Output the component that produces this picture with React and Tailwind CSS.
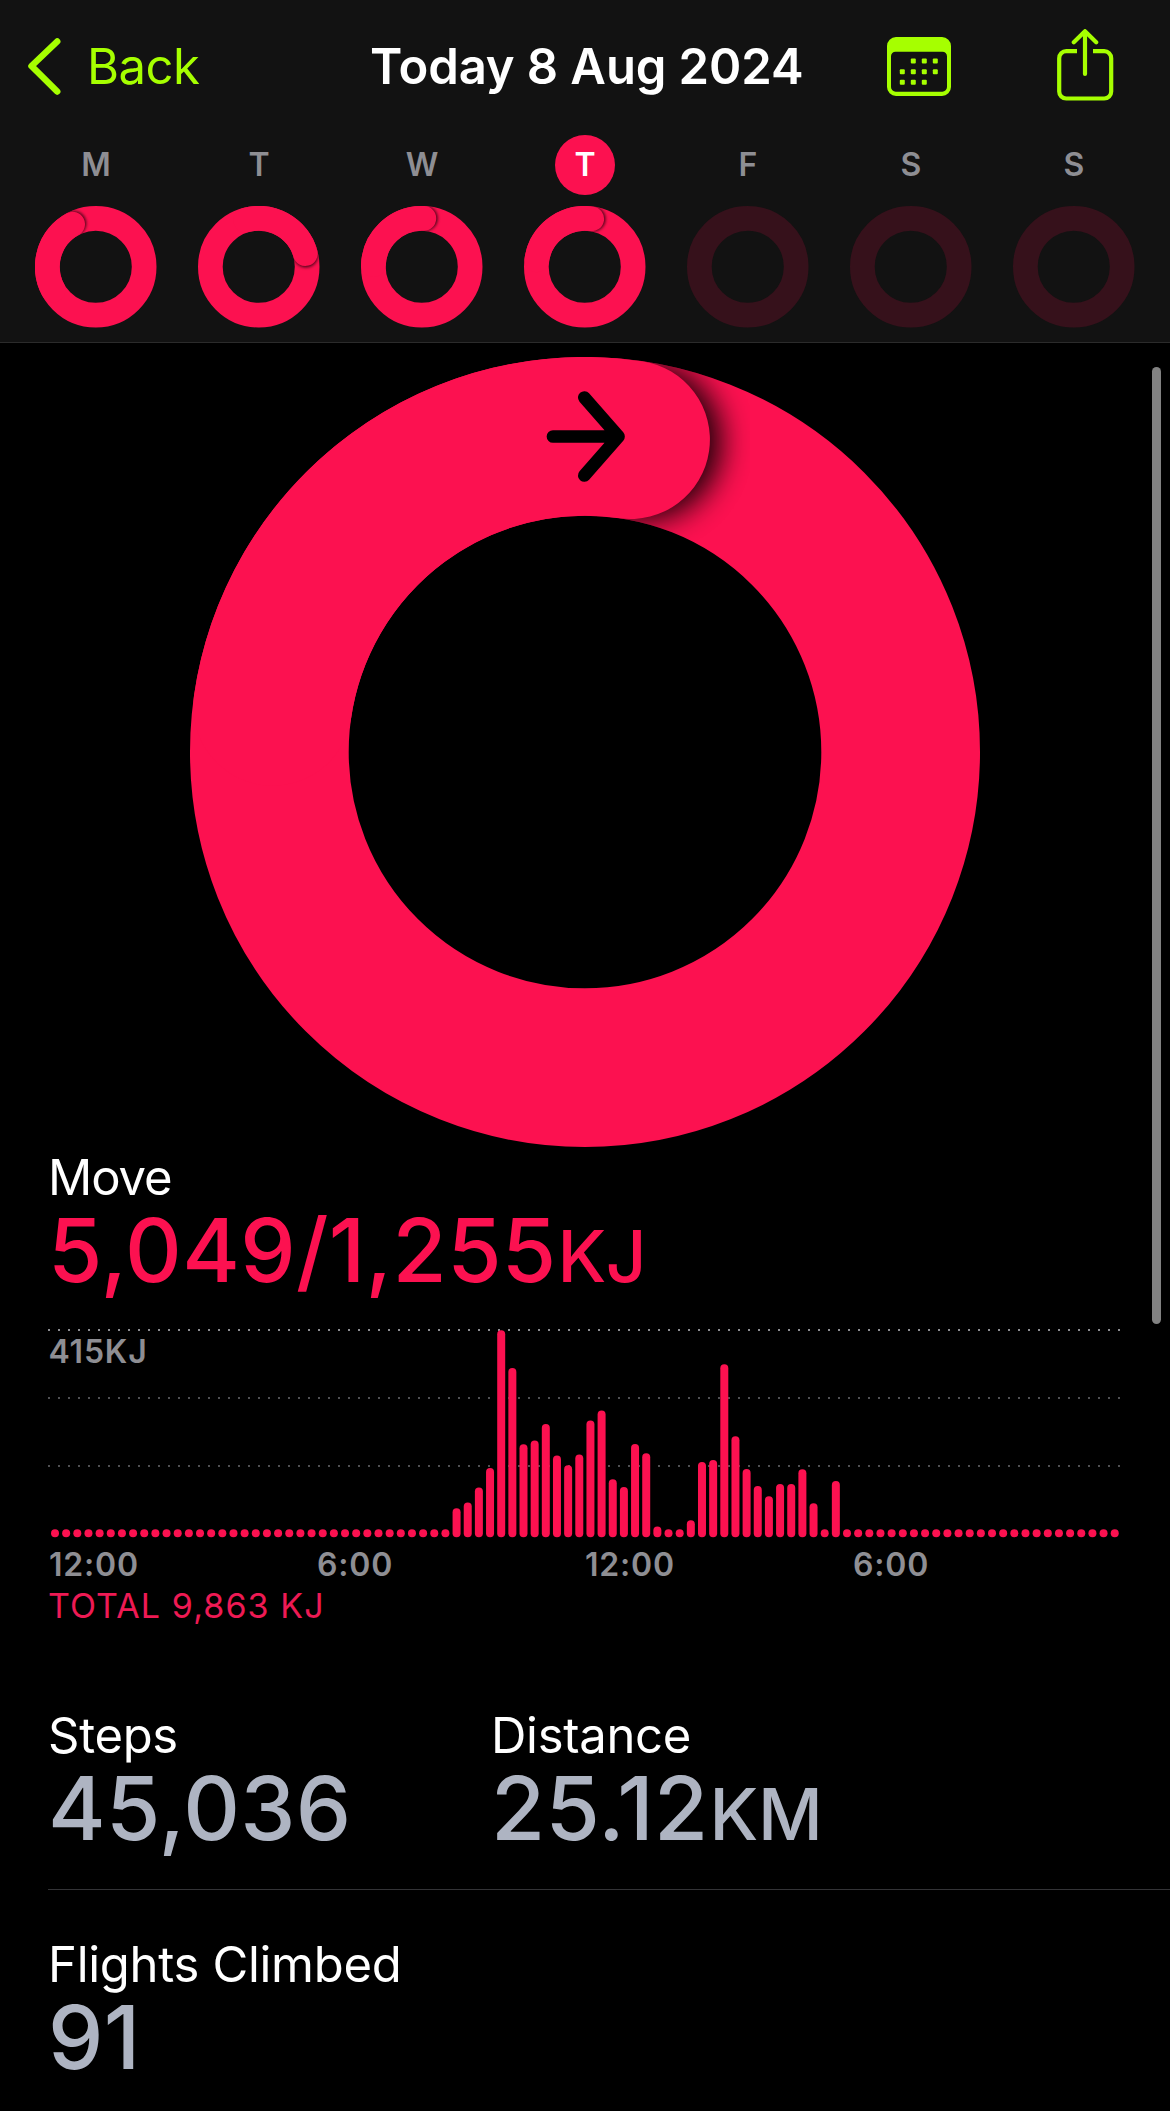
import React from 'react';

const WEEK = [
  { label: 'M', angle: -28.5 },
  { label: 'T', angle: 74.3 },
  { label: 'W', angle: 2.5 },
  { label: 'T', angle: 8.3, today: true },
  { label: 'F' },
  { label: 'S' },
  { label: 'S' },
];

// One bar per 15 minutes, everything outside the active part sits at the minimum
const ACTIVE_START = 36;
const ACTIVE = [
  29, 34.7, 49.7, 69.3, 207, 169.3, 93, 96.7, 113.3, 81.7, 72, 82.7, 116.7, 126.7, 58, 50.3,
  93.3, 84, 10.7, 8, 8, 17, 75.3, 77.3, 173, 101, 68.3, 51.3, 41, 53.3, 53.3, 68, 34, 8, 56.3,
];
const BARS = Array.from({ length: 96 }, (_, i) => ACTIVE[i - ACTIVE_START] ?? 8);

const HOURS = ['12:00', '6:00', '12:00', '6:00'];

function Ring({ id, size, stroke, angle, blur, offset, shade, className, children }) {
  const c = size / 2;
  const r = (size - stroke) / 2;
  if (angle === undefined) {
    return (
      <svg width={size} height={size} className={className}>
        <circle cx={c} cy={c} r={r} fill="none" stroke="#36111b" strokeWidth={stroke} />
      </svg>
    );
  }
  return (
    <svg width={size} height={size} className={className}>
      <defs>
        <mask id={`${id}-ring`}>
          <circle cx={c} cy={c} r={r} fill="none" stroke="#fff" strokeWidth={stroke} />
        </mask>
        <filter id={`${id}-blur`} x="-60%" y="-60%" width="220%" height="220%">
          <feGaussianBlur stdDeviation={blur} />
        </filter>
      </defs>
      <circle cx={c} cy={c} r={r} fill="none" stroke="#fc1150" strokeWidth={stroke} />
      {/* overlapping tip with its shadow */}
      <g mask={`url(#${id}-ring)`}>
        <g transform={`rotate(${angle} ${c} ${c})`}>
          <circle cx={c + offset} cy={c - r} r={stroke / 2} fill="#000" opacity={shade} filter={`url(#${id}-blur)`} />
        </g>
      </g>
      <g transform={`rotate(${angle} ${c} ${c})`}>
        <path
          d={`M ${c - r} ${c} A ${r} ${r} 0 0 1 ${c} ${c - r}`}
          fill="none"
          stroke="#fc1150"
          strokeWidth={stroke}
          strokeLinecap="round"
        />
      </g>
      {children}
    </svg>
  );
}

function CalendarIcon() {
  const dots = [
    [1, 0], [2, 0], [3, 0],
    [0, 1], [1, 1], [2, 1], [3, 1],
    [0, 2], [1, 2], [2, 2],
  ];
  return (
    <svg width="66" height="60" viewBox="0 0 66 60" fill="#a6ff00">
      <path
        fillRule="evenodd"
        d="M10 0h46a9 9 0 0 1 9 9v41a9 9 0 0 1-9 9H10a9 9 0 0 1-9-9V9a9 9 0 0 1 9-9zM9.500 14.700a4.500 4.500 0 0 0-4.500 4.500V50a4.700 4.700 0 0 0 4.700 4.700h46.600A4.700 4.700 0 0 0 61 50V19.200a4.500 4.500 0 0 0-4.500-4.500z"
      />
      {dots.map(([x, y]) => (
        <rect key={`${x}-${y}`} x={13.8 + x * 11} y={21.6 + y * 10.6} width="5" height="5" rx="1" />
      ))}
    </svg>
  );
}

function ShareIcon() {
  return (
    <svg width="58" height="73" viewBox="0 0 58 73" fill="none" stroke="#a6ff00" strokeWidth="4.2">
      <path d="M21 22.200H10.200a7 7 0 0 0-7 7v33.300a7 7 0 0 0 7 7h38a7 7 0 0 0 7-7V29.200a7 7 0 0 0-7-7H37" />
      <path d="M29 45V3M17.800 13.200 29 2.200l11.200 11" strokeLinecap="round" strokeLinejoin="round" />
    </svg>
  );
}

function Header() {
  return (
    <header className="h-[343px] border-b border-[#2b2b2b] bg-[#121212]">
      <div className="flex h-[134px] items-center">
        <div className="flex w-[370px] items-center pl-[26px] text-[#a6ff00]">
          <svg width="36" height="58" viewBox="0 0 36 58" fill="none" stroke="currentColor" strokeWidth="6.5">
            <path d="M31.200 3.500 5.500 28l25.700 25.500" strokeLinecap="round" strokeLinejoin="round" />
          </svg>
          <span className="ml-[25px] text-[49px] tracking-[-0.5px]">Back</span>
        </div>
        <h1 className="w-[516px] text-[49px] font-semibold tracking-[-0.1px] whitespace-nowrap">Today 8 Aug 2024</h1>
        <CalendarIcon />
        <div className="ml-[104px] pb-1">
          <ShareIcon />
        </div>
      </div>
      <div className="flex px-[14.5px] pt-px">
        {WEEK.map((day, i) => (
          <div key={i} className="flex w-[163px] flex-col items-center">
            <span
              className={`flex size-[60px] items-center justify-center rounded-full text-[32px] font-semibold ${
                day.today ? 'bg-[#fc1150] text-white' : 'text-[#8e8e93]'
              }`}
            >
              {day.label}
            </span>
            <Ring id={`day${i}`} size={121.5} stroke={24.7} angle={day.angle} blur={1.8} offset={1.5} shade={0.7} className="mt-[11px]" />
          </div>
        ))}
      </div>
    </header>
  );
}

function Chart() {
  return (
    <div className="ml-12 w-[1073px]">
      <svg width="1073" height="209" className="block">
        {[1, 69, 137].map((y, i) => (
          <line key={y} x1="0" x2="1072" y1={y} y2={y} stroke={i === 0 ? '#8e8e93' : '#505053'} strokeWidth="2" strokeDasharray="2 8" />
        ))}
        {BARS.map((h, i) => (
          <rect key={i} x={3 + i * 11.155} y={208.3 - h} width="8" height={h} rx="4" fill="#fc1150" />
        ))}
        <text x="0.5" y="34" fill="#8e8e93" fontSize="32" fontWeight="600" letterSpacing="0.8">415KJ</text>
      </svg>
      <div className="mt-[7px] flex pl-px text-[32px] leading-[40px] font-semibold tracking-[0.8px] text-[#8e8e93]">
        {HOURS.map((hour, i) => (
          <span key={i} className="w-[268px]">{hour}</span>
        ))}
      </div>
      <div className="text-[34px] leading-[42px] tracking-[1.1px] text-[#ee1a54]">TOTAL 9,863 KJ</div>
    </div>
  );
}

function Stat({ label, value, unit, className, color = 'text-[#aeb4c2]', tracking = 'tracking-[-0.3px]' }) {
  return (
    <div className={className}>
      <div className={`text-[49px] leading-[60px] ${tracking}`}>{label}</div>
      <div className={`text-[88px] leading-[84px] font-medium tracking-[0.3px] whitespace-nowrap ${color}`}>
        {value}
        {unit && <span className="ml-px text-[71px] tracking-[-0.5px]">{unit}</span>}
      </div>
    </div>
  );
}

export default function App() {
  return (
    <div className="relative h-[2111px] w-[1170px] overflow-hidden bg-black font-['Inter',sans-serif] text-white">
      <Header />
      <div className="flex justify-center pt-[14px]">
        <Ring id="move" size={790} stroke={158.7} angle={8.3} blur={15} offset={12} shade={0.9}>
          <path
            d="M363 79.500h65M394.300 40.500 428.500 79.500 394.300 118.500"
            fill="none"
            stroke="#000"
            strokeWidth="12.700"
            strokeLinecap="round"
            strokeLinejoin="round"
          />
        </Ring>
      </div>
      <Stat
        label="Move"
        value="5,049/1,255"
        unit="KJ"
        color="text-[#fc1150]"
        tracking="tracking-[-1.1px]"
        className="h-[182px] pt-px pl-12"
      />
      <Chart />
      <div className="mt-[79px] ml-12 flex h-[184px] border-b border-[#333336]">
        <Stat label="Steps" value="45,036" className="w-[443px]" />
        <Stat label="Distance" value="25.12" unit="KM" />
      </div>
      <Stat label="Flights Climbed" value="91" className="mt-[45px] ml-12" />
      {/* scroll indicator */}
      <div className="absolute top-[367px] right-[9px] h-[957px] w-[9px] rounded-full bg-[#828282]" />
    </div>
  );
}
